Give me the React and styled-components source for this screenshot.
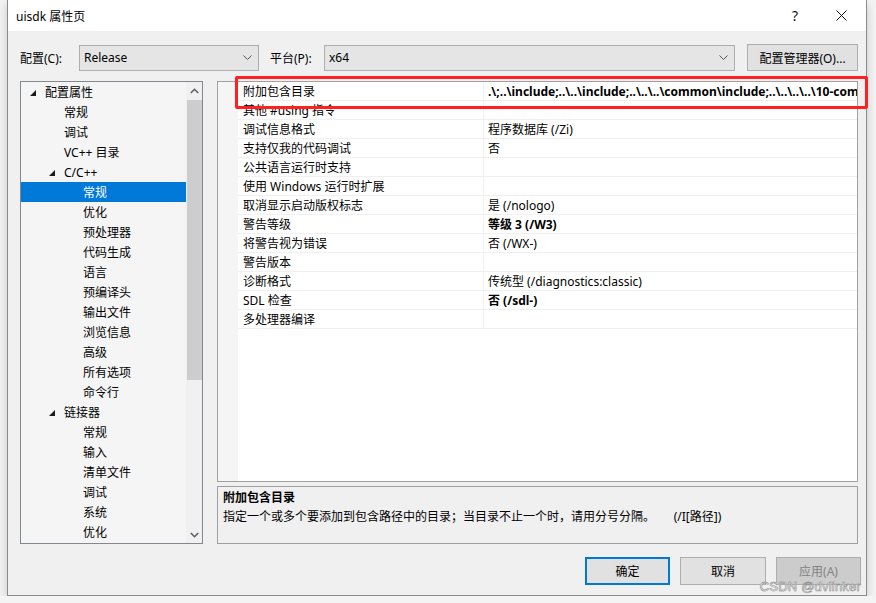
import React from "react";
import styled, { createGlobalStyle } from "styled-components";

const Global = createGlobalStyle`
  html, body { margin: 0; padding: 0; background: #f4f4f4; }
  body { font-family: "Segoe UI", "Noto Sans", "Noto Sans CJK SC", sans-serif; font-size: 12px; color: #000; }
  * { box-sizing: border-box; }
`;

const Window = styled.div`
  position: relative;
  margin-left: 7px;
  width: 860px;
  height: 596px;
  border: 1px solid #8a8a8a;
  border-top: none;
  background: #f0f0f0;
  box-shadow: 0 4px 10px rgba(0,0,0,0.18);
  display: flex;
  flex-direction: column;
`;

const TitleBar = styled.div`
  height: 31px;
  background: #fff;
  display: flex;
  align-items: center;
  padding-left: 8px;
  font-size: 12px;
`;
const Title = styled.div`flex: 1;`;
const TitleBtn = styled.div`
  width: ${p => p.$w}px;
  display: flex;
  align-items: center;
  justify-content: center;
  font-size: 14px;
  color: #111;
`;
const TitleEnd = styled.div`width: 2px;`;

const Body = styled.div`
  flex: 1;
  display: flex;
  flex-direction: column;
  padding: 13px 5px 0 12px;
`;

const Toolbar = styled.div`
  display: flex;
  align-items: center;
  height: 27px;
  padding-right: 3px;
`;
const Label = styled.div`
  width: ${p => p.$w}px;
  margin-left: ${p => p.$ml || 0}px;
  white-space: nowrap;
`;
const Combo = styled.div`
  width: ${p => (p.$w ? p.$w + "px" : "auto")};
  flex: ${p => (p.$w ? "none" : 1)};
  height: 26px;
  border: 1px solid #adadad;
  background: #e5e5e5;
  display: flex;
  align-items: center;
  padding: 0 6px 0 4px;
  justify-content: space-between;
`;
const Button = styled.div`
  width: ${p => p.$w}px;
  height: ${p => p.$h || 28}px;
  margin-left: ${p => p.$ml || 0}px;
  border: ${p => (p.$primary ? "2px solid #0078d7" : "1px solid #adadad")};
  background: ${p => (p.$disabled ? "#cccccc" : "#e1e1e1")};
  color: ${p => (p.$disabled ? "#838383" : "#000")};
  display: flex;
  align-items: center;
  justify-content: center;
  white-space: nowrap;
  flex: none;
`;

const Main = styled.div`
  display: flex;
  margin-top: 10px;
  height: 463px;
  gap: 14px;
  padding-right: 3px;
`;

const Tree = styled.div`
  width: 183px;
  border: 1px solid #828790;
  background: #f5f5f5;
  display: flex;
  overflow: hidden;
`;
const TreeList = styled.div`
  flex: 1;
  display: flex;
  flex-direction: column;
`;
const TreeRow = styled.div`
  height: 20px;
  flex: none;
  display: flex;
  align-items: center;
  padding-left: ${p => 24 + p.$level * 19}px;
  background: ${p => (p.$selected ? "#0078d7" : "transparent")};
  color: ${p => (p.$selected ? "#fff" : "#000")};
  position: relative;
  white-space: nowrap;
`;
const Expander = styled.svg`
  position: absolute;
  left: ${p => 9 + p.$level * 19}px;
  top: 8px;
`;
const Scrollbar = styled.div`
  width: 16px;
  background: #f0f0f0;
  display: flex;
  flex-direction: column;
  align-items: center;
`;
const ScrollArrow = styled.div`
  height: 17px;
  display: flex;
  align-items: center;
  justify-content: center;
`;
const Thumb = styled.div`
  width: 15px;
  height: 280px;
  background: #cdcdcd;
  margin-top: 1px;
`;
const ScrollSpacer = styled.div`flex: 1;`;

const RightCol = styled.div`
  flex: 1;
  display: flex;
  flex-direction: column;
  gap: 4px;
`;
const Grid = styled.div`
  height: 401px;
  border: 1px solid #a0a0a0;
  background: #fff;
  display: flex;
`;
const Gutter = styled.div`
  width: 20px;
  background: #f5f5f5;
`;
const Rows = styled.div`
  flex: 1;
  display: flex;
  flex-direction: column;
  overflow: hidden;
`;
const Row = styled.div`
  height: 19px;
  display: grid;
  grid-template-columns: 246px 1fr;
  border-bottom: 1px solid #f0f0f0;
`;
const NameCell = styled.div`
  padding-left: 5px;
  border-right: 1px solid #f0f0f0;
  display: flex;
  align-items: center;
  white-space: nowrap;
  overflow: hidden;
`;
const ValueCell = styled.div`
  padding-left: 4px;
  display: flex;
  align-items: center;
  white-space: nowrap;
  overflow: hidden;
  font-weight: ${p => (p.$bold ? 700 : 400)};
`;

const Desc = styled.div`
  flex: 1;
  border: 1px solid #a0a0a0;
  background: #f0f0f0;
  padding: 1px 5px;
  line-height: 19px;
`;
const DescTitle = styled.div`font-weight: 700;`;
const DescText = styled.div`white-space: pre;`;

const Footer = styled.div`
  display: flex;
  justify-content: flex-end;
  margin-top: 13px;
  gap: 10px;
`;

const Highlight = styled.div`
  position: absolute;
  left: 227px;
  top: 76px;
  width: 633px;
  height: 33px;
  border: 3px solid #ff2020;
  border-radius: 2px;
  pointer-events: none;
`;
const Watermark = styled.div`
  position: absolute;
  right: 5px;
  bottom: 1px;
  font-size: 13px;
  font-family: "Liberation Sans", "Noto Sans", sans-serif;
  color: #f4f4f4;
  -webkit-text-stroke: 0.4px #7a7a7a;
  text-shadow: 0 0 1px #9a9a9a;
  letter-spacing: 0.2px;
`;

const Chevron = ({ up, color = "#606060" }) => (
  <svg width="9" height="6" viewBox="0 0 9 6">
    <polyline
      points={up ? "0.8,5 4.5,1.3 8.2,5" : "0.8,1 4.5,4.7 8.2,1"}
      fill="none"
      stroke={color}
      strokeWidth="1.6"
    />
  </svg>
);

const ComboArrow = () => (
  <svg width="9" height="5" viewBox="0 0 9 5">
    <polyline points="0.5,0.5 4.5,4.5 8.5,0.5" fill="none" stroke="#555" strokeWidth="1" />
  </svg>
);

const tree = [
  { t: "配置属性", l: 0, e: true },
  { t: "常规", l: 1 },
  { t: "调试", l: 1 },
  { t: "VC++ 目录", l: 1 },
  { t: "C/C++", l: 1, e: true },
  { t: "常规", l: 2, s: true },
  { t: "优化", l: 2 },
  { t: "预处理器", l: 2 },
  { t: "代码生成", l: 2 },
  { t: "语言", l: 2 },
  { t: "预编译头", l: 2 },
  { t: "输出文件", l: 2 },
  { t: "浏览信息", l: 2 },
  { t: "高级", l: 2 },
  { t: "所有选项", l: 2 },
  { t: "命令行", l: 2 },
  { t: "链接器", l: 1, e: true },
  { t: "常规", l: 2 },
  { t: "输入", l: 2 },
  { t: "清单文件", l: 2 },
  { t: "调试", l: 2 },
  { t: "系统", l: 2 },
  { t: "优化", l: 2 },
];

const props = [
  ["附加包含目录", ".\\;..\\include;..\\..\\include;..\\..\\..\\common\\include;..\\..\\..\\..\\10-common\\include;%(AdditionalIncludeDirectories)", true],
  ["其他 #using 指令", ""],
  ["调试信息格式", "程序数据库 (/Zi)"],
  ["支持仅我的代码调试", "否"],
  ["公共语言运行时支持", ""],
  ["使用 Windows 运行时扩展", ""],
  ["取消显示启动版权标志", "是 (/nologo)"],
  ["警告等级", "等级 3 (/W3)", true],
  ["将警告视为错误", "否 (/WX-)"],
  ["警告版本", ""],
  ["诊断格式", "传统型 (/diagnostics:classic)"],
  ["SDL 检查", "否 (/sdl-)", true],
  ["多处理器编译", ""],
];

export default function App() {
  return (
    <>
      <Global />
      <Window>
        <TitleBar>
          <Title>uisdk 属性页</Title>
          <TitleBtn $w={46}>?</TitleBtn>
          <TitleBtn $w={46}>
            <svg width="11" height="11" viewBox="0 0 11 11">
              <path d="M0.5 0.5 L10.5 10.5 M10.5 0.5 L0.5 10.5" stroke="#111" strokeWidth="1" />
            </svg>
          </TitleBtn>
          <TitleEnd />
        </TitleBar>
        <Body>
          <Toolbar>
            <Label $w={59}>配置(C):</Label>
            <Combo $w={180}>
              <span>Release</span>
              <ComboArrow />
            </Combo>
            <Label $w={54} $ml={11}>平台(P):</Label>
            <Combo>
              <span>x64</span>
              <ComboArrow />
            </Combo>
            <Button $w={111} $h={27} $ml={12}>配置管理器(O)...</Button>
          </Toolbar>
          <Main>
            <Tree>
              <TreeList>
                {tree.map((n, i) => (
                  <TreeRow key={i} $level={n.l} $selected={n.s}>
                    {n.e && (
                      <Expander $level={n.l} width="6" height="6" viewBox="0 0 6 6">
                        <polygon points="6,0 6,6 0,6" fill="#1a1a1a" />
                      </Expander>
                    )}
                    {n.t}
                  </TreeRow>
                ))}
              </TreeList>
              <Scrollbar>
                <ScrollArrow><Chevron up /></ScrollArrow>
                <Thumb />
                <ScrollSpacer />
                <ScrollArrow><Chevron /></ScrollArrow>
              </Scrollbar>
            </Tree>
            <RightCol>
              <Grid>
                <Gutter />
                <Rows>
                  {props.map(([n, v, b], i) => (
                    <Row key={i}>
                      <NameCell>{n}</NameCell>
                      <ValueCell $bold={b}>{v}</ValueCell>
                    </Row>
                  ))}
                </Rows>
              </Grid>
              <Desc>
                <DescTitle>附加包含目录</DescTitle>
                <DescText>{"指定一个或多个要添加到包含路径中的目录；当目录不止一个时，请用分号分隔。      (/I[路径])"}</DescText>
              </Desc>
            </RightCol>
          </Main>
          <Footer>
            <Button $w={85} $primary>确定</Button>
            <Button $w={86}>取消</Button>
            <Button $w={85} $disabled>应用(A)</Button>
          </Footer>
        </Body>
        <Highlight />
        <Watermark>CSDN @dvlinker</Watermark>
      </Window>
    </>
  );
}
